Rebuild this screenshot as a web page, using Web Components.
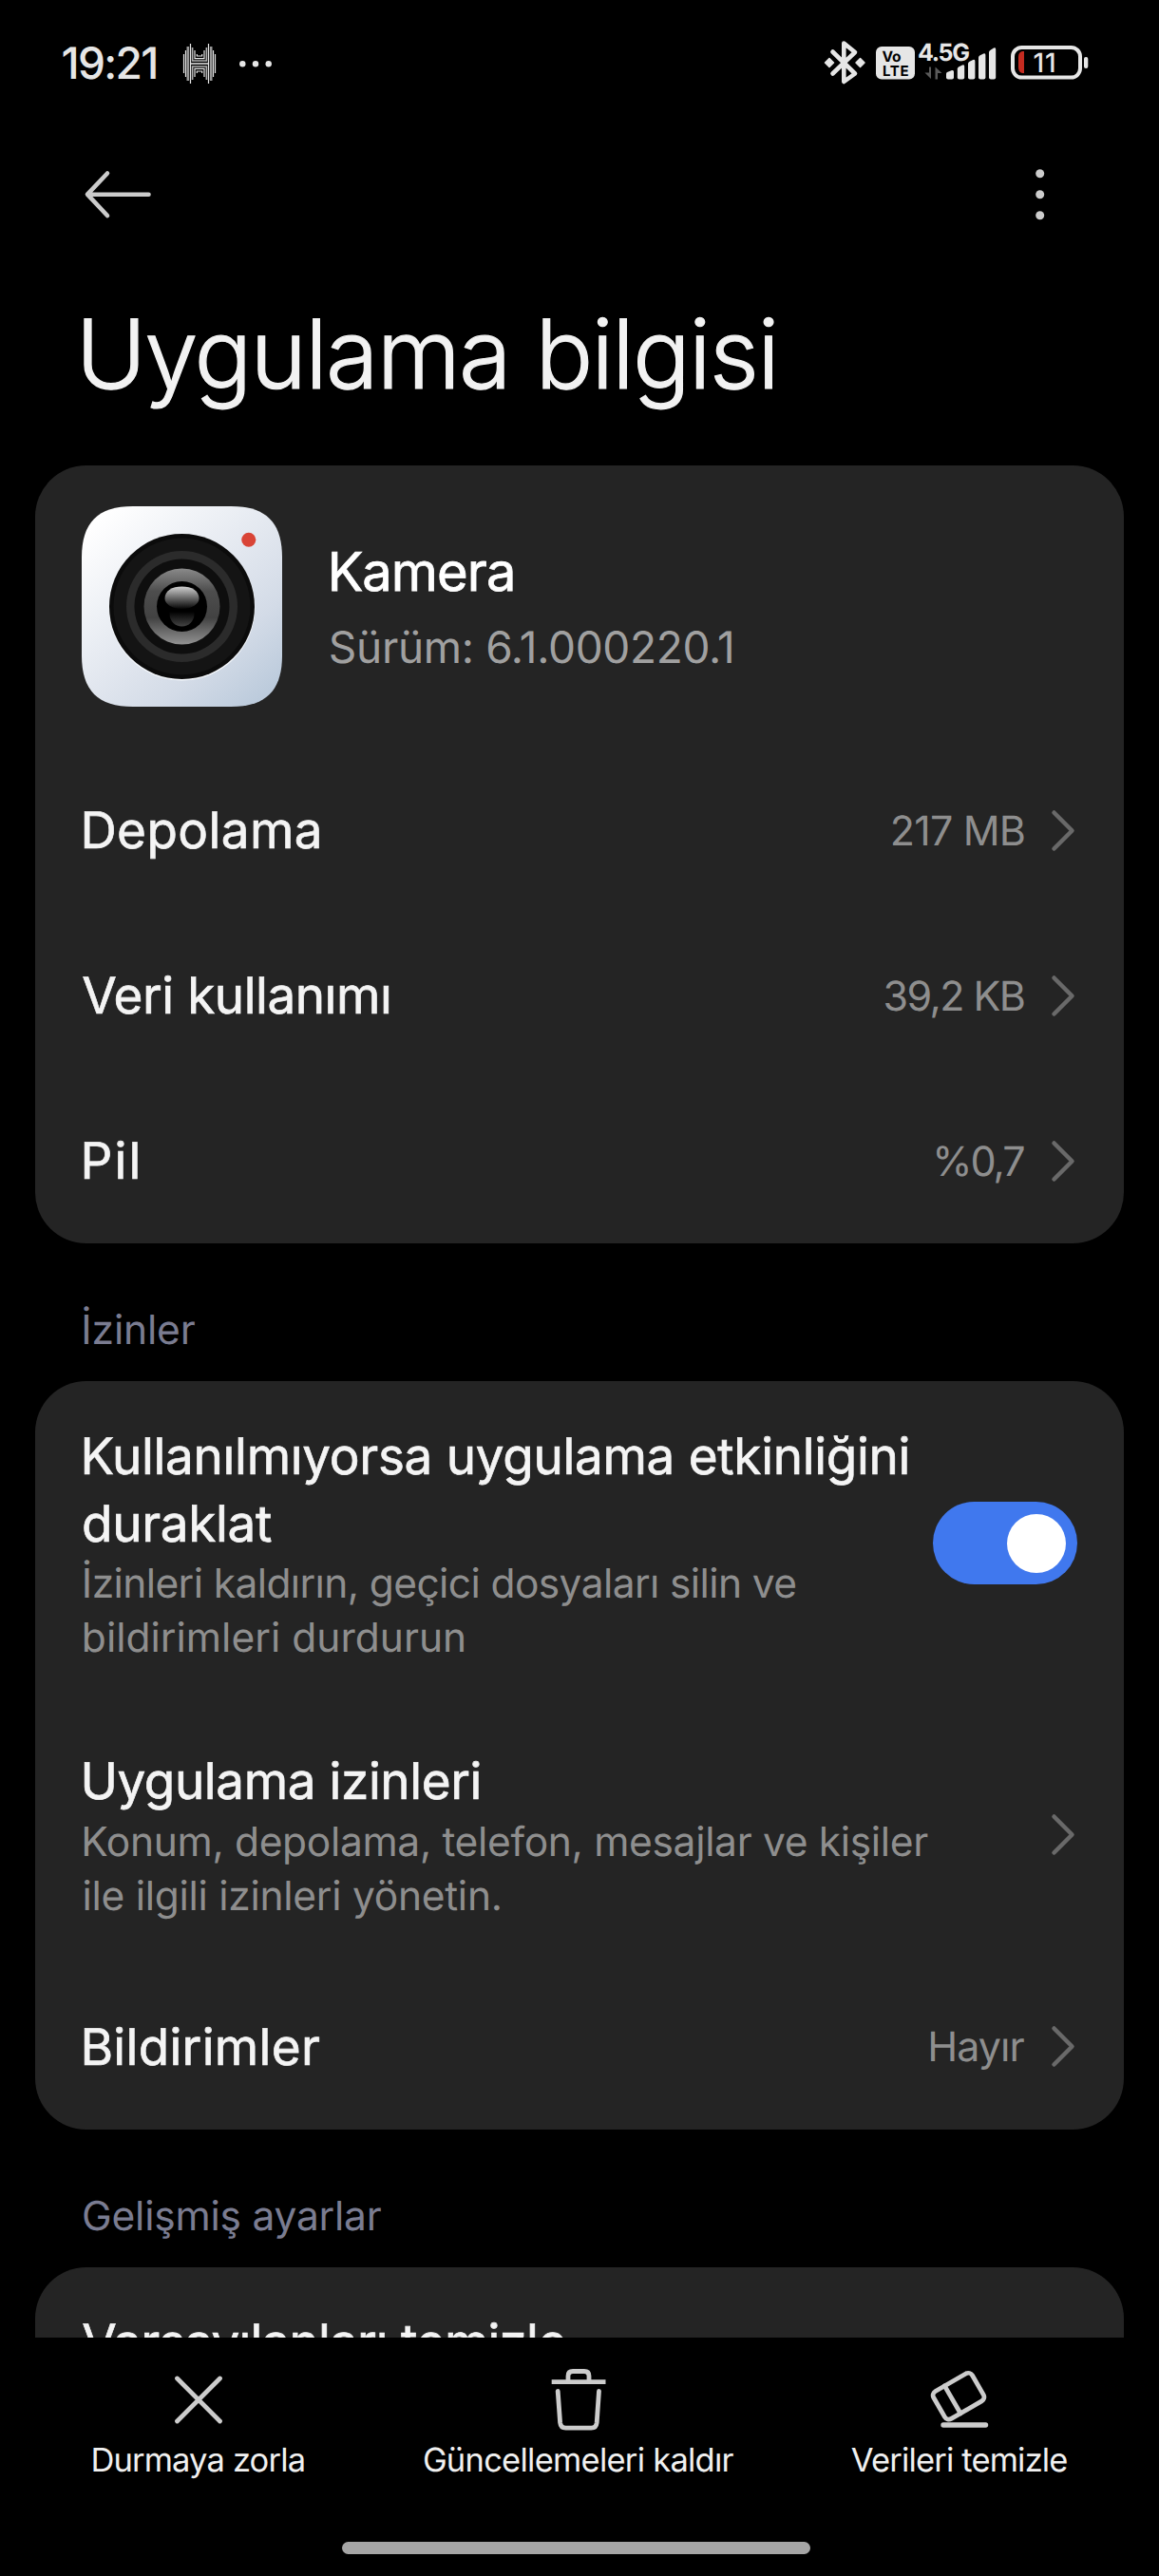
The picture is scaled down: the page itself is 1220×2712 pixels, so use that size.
<!DOCTYPE html>
<html lang="tr">
<head>
  <meta charset="utf-8">
  <title>Uygulama bilgisi</title>
  <style>
    html, body {
      margin: 0;
      background: #000;
    }
    body {
      font-family: Inter, "Noto Sans", sans-serif;
      text-rendering: geometricPrecision;
    }
  </style>
</head>
<body>
  <app-info-page></app-info-page>

  <script>
    // One line of text, tracked so that its ink is exactly `width` pixels wide
    class FitText extends HTMLElement {
      connectedCallback() {
        this.attachShadow({ mode: 'open' }).innerHTML = `
          <style>
            :host {
              display: block;
              white-space: nowrap;
            }
          </style>
          <slot></slot>
        `;
        const text = this.textContent;
        const style = getComputedStyle(this);
        const ctx = document.createElement('canvas').getContext('2d');
        // measured at 10x to keep the fractions
        ctx.font = `${style.fontWeight} ${parseFloat(style.fontSize) * 10}px Inter`;
        const m = ctx.measureText(text);
        const left = -m.actualBoundingBoxLeft / 10;
        const ink = m.actualBoundingBoxRight / 10 - left;
        const spacing = (Number(this.getAttribute('width')) - ink) / (text.length - 1);
        const right = m.width / 10 - ink - left;
        const shift = Number(this.getAttribute('shift') || 0);
        this.style.letterSpacing = `${spacing.toFixed(3)}px`;
        this.style.marginLeft = `${(shift - left).toFixed(2)}px`;
        this.style.marginRight = `${(-right - spacing).toFixed(2)}px`;
      }
    }
    customElements.define('fit-text', FitText);

    class StatusBar extends HTMLElement {
      connectedCallback() {
        this.attachShadow({ mode: 'open' }).innerHTML = `
          <style>
            :host {
              display: flex;
              justify-content: space-between;
              align-items: center;
              box-sizing: border-box;
              height: 133px;
              padding: 0 72px 0 66px;
              color: #e6e6e6;
            }
            .side {
              display: flex;
              align-items: center;
            }
            .time {
              font-size: 46px;
              font-weight: 500;
              line-height: 60px;
            }
            .harman { margin-left: 28px; }
            .more { margin-left: 23px; }
            svg { display: block; }
            text { font-family: Inter, sans-serif; }
          </style>
          <div class="side">
            <fit-text class="time" width="98">19:21</fit-text>
            <svg class="harman" width="36" height="44" viewBox="-18 -22 36 44" fill="none" stroke="#e6e6e6" stroke-width="1.2">
              <path d="M-16.5-10V10M-14.5-14V14M-9.5-21V21M9.5-21V21M14.5-14V14M16.5-10V10"/>
              <path d="M-12.2-18V18M12.2-18V18" stroke="#999" stroke-width="2.6"/>
              <path d="M-7.4-17V-3H7.4V-17M-7.4 17V3H7.4V17" stroke="#b0b0b0" stroke-width="1.6"/>
              <path d="M-5-14V-5.4H5V-14M-5 14V5.4H5V14M-2.7-10V-8H2.7V-10M-2.7 10V8H2.7V10"/>
              <path d="M-9 0H9" stroke="#b0b0b0" stroke-width="2"/>
            </svg>
            <svg class="more" width="36" height="8" viewBox="0 0 36 8" fill="#e6e6e6">
              <circle cx="4.3" cy="4.3" r="3.2"/><circle cx="18" cy="4.3" r="3.2"/><circle cx="31.7" cy="4.3" r="3.2"/>
            </svg>
          </div>
          <svg width="282" height="56" viewBox="868 40 282 56" fill="#e6e6e6">
            <path d="M878.5 55.5L902 78.5L890.3 87V46.5L902 56L878.5 78.5" fill="none" stroke="#e6e6e6" stroke-width="4.6" stroke-linejoin="round" stroke-linecap="round"/>
            <path d="M870.5 67L875 62.5L879.5 67L875 71.5ZM903 67L907.5 62.5L912 67L907.5 71.5Z" stroke="#e6e6e6" stroke-width="1.5" stroke-linejoin="round"/>
            <rect x="924" y="50" width="41" height="34.6" rx="6"/>
            <text x="930.5" y="66" font-size="15.5" font-weight="700" fill="#000" textLength="20">Vo</text>
            <text x="931" y="80.5" font-size="15" font-weight="700" fill="#000" textLength="27.5">LTE</text>
            <text x="968" y="64.5" font-size="25" font-weight="700" textLength="55">4.5G</text>
            <path d="M982 71.5V84L975.5 77.5H980V71.5ZM986.5 84.5V71.5L993.5 78H989V84.5Z" fill="#5a5a5a"/>
            <path d="M998 78.5Q998 77.5 999 77L1004 75Q1006 74.5 1006 76.5V82.5Q1006 84.5 1004 84.5H1000Q998 84.5 998 82.5Z"/>
            <path d="M1009.8 73.5Q1009.8 72.3 1011 71.5L1015 69.5Q1017.2 68.5 1017.2 71V82.5Q1017.2 84.5 1015.2 84.5H1011.8Q1009.8 84.5 1009.8 82.5Z"/>
            <path d="M1021 68Q1021 66.8 1022.2 66L1026.2 64Q1028.4 63 1028.4 65.5V82.5Q1028.4 84.5 1026.4 84.5H1023Q1021 84.5 1021 82.5Z"/>
            <path d="M1032 61.5Q1032 60.3 1033.2 59.5L1037.2 57.5Q1039.4 56.5 1039.4 59V82.5Q1039.4 84.5 1037.4 84.5H1034Q1032 84.5 1032 82.5Z"/>
            <path d="M1043 56Q1043 54.8 1044.2 54L1048 51.5Q1050.2 50.5 1050.2 53V82.5Q1050.2 84.5 1048.2 84.5H1045Q1043 84.5 1043 82.5Z"/>
            <rect x="1068" y="51" width="71" height="31.6" rx="9.5" fill="none" stroke="#e6e6e6" stroke-width="4"/>
            <rect x="1143" y="61" width="4.3" height="12" rx="2"/>
            <path d="M1080 55V78H1078Q1074 77 1074 72V61Q1074 56 1078 55Z" fill="#c42b20"/>
            <text x="1089.5" y="77" font-size="28" font-weight="500" textLength="24">11</text>
          </svg>
        `;
      }
    }
    customElements.define('status-bar', StatusBar);

    class AppBar extends HTMLElement {
      connectedCallback() {
        this.attachShadow({ mode: 'open' }).innerHTML = `
          <style>
            :host {
              display: block;
              height: 357px;
              color: #f2f2f2;
            }
            .actions {
              display: flex;
              justify-content: space-between;
              align-items: center;
              height: 144px;
              padding: 0 85px 0 87.5px;
            }
            h1 {
              margin: 0;
              padding: 1.5px 0 0 87.5px;
              font-size: 101px;
              font-weight: 300;
              line-height: 189px;
              -webkit-text-stroke: 1.2px currentColor;
            }
          </style>
          <div class="actions">
            <svg width="72" height="56" viewBox="0 0 72 56" fill="none" stroke="#ccc" stroke-width="4.6" stroke-linejoin="round" stroke-linecap="round">
              <path d="M68.5 27.7H4.5M25 5.5L4 27.7L25 50"/>
            </svg>
            <svg width="80" height="56" viewBox="0 0 80 56" fill="#ccc">
              <circle cx="39.7" cy="5.7" r="4.5"/><circle cx="39.7" cy="27.7" r="4.5"/><circle cx="39.7" cy="49.7" r="4.5"/>
            </svg>
          </div>
          <h1><fit-text width="727">Uygulama bilgisi</fit-text></h1>
        `;
      }
    }
    customElements.define('app-bar', AppBar);

    class SettingsCard extends HTMLElement {
      connectedCallback() {
        this.attachShadow({ mode: 'open' }).innerHTML = `
          <style>
            :host {
              display: block;
              margin: 0 37px;
              border-radius: 54px;
              background: #242424;
            }
          </style>
          <slot></slot>
        `;
      }
    }
    customElements.define('settings-card', SettingsCard);

    class SectionTitle extends HTMLElement {
      connectedCallback() {
        this.attachShadow({ mode: 'open' }).innerHTML = `
          <style>
            :host {
              display: block;
              box-sizing: border-box;
              height: 145px;
              padding: 62px 88px 0;
              font-size: 42.5px;
              line-height: 60px;
              color: #7a7c91;
            }
          </style>
          <slot></slot>
        `;
      }
    }
    customElements.define('section-title', SectionTitle);

    class AppHeader extends HTMLElement {
      connectedCallback() {
        this.attachShadow({ mode: 'open' }).innerHTML = `
          <style>
            :host {
              display: flex;
              gap: 52px;
              box-sizing: border-box;
              height: 297px;
              padding: 43px 49px 0;
            }
            .info { padding-top: 32px; }
            .name {
              font-size: 56px;
              line-height: 74px;
              color: #fff;
              -webkit-text-stroke: 0.8px currentColor;
            }
            .version {
              margin-top: 6px;
              font-size: 46px;
              line-height: 74px;
              color: #a0a0a0;
            }
          </style>
          <svg width="211" height="211" viewBox="0 0 211 211">
            <defs>
              <linearGradient id="body" x1="0.1" y1="0.05" x2="0.9" y2="0.95">
                <stop offset="0" stop-color="#fff"/><stop offset="0.5" stop-color="#e2e7ef"/><stop offset="0.75" stop-color="#d3dbe7"/><stop offset="1" stop-color="#bccbdc"/>
              </linearGradient>
              <linearGradient id="ring" x1="0" y1="0" x2="0" y2="1">
                <stop offset="0" stop-color="#8a8a8a"/><stop offset="0.3" stop-color="#4d4d4d"/><stop offset="0.65" stop-color="#424242"/><stop offset="1" stop-color="#929292"/>
              </linearGradient>
              <linearGradient id="shine" x1="0" y1="0" x2="0" y2="1">
                <stop offset="0" stop-color="#d0d0d0"/><stop offset="0.5" stop-color="#6a6a6a"/><stop offset="1" stop-color="#050505"/>
              </linearGradient>
              <linearGradient id="glow" x1="0" y1="0" x2="0" y2="1">
                <stop offset="0.4" stop-color="#000"/><stop offset="1" stop-color="#444"/>
              </linearGradient>
            </defs>
            <path d="M54 0H157C194 0 211 17 211 54V157C211 194 194 211 157 211H54C17 211 0 194 0 157V54C0 17 17 0 54 0Z" fill="url(#body)"/>
            <circle cx="105.5" cy="106.5" r="77" fill="#f5f8fc"/>
            <circle cx="105.5" cy="105.5" r="76.5" fill="#0b0b0b"/>
            <circle cx="105.5" cy="105.5" r="72" fill="#141414"/>
            <circle cx="105.5" cy="105.5" r="58.5" fill="#2b2b2b"/>
            <circle cx="105.5" cy="105.5" r="50" fill="#0e0e0e"/>
            <circle cx="105.5" cy="105.5" r="40" fill="url(#ring)"/>
            <circle cx="105.5" cy="105.5" r="26.5" fill="#000"/>
            <circle cx="105.5" cy="113.5" r="13" fill="url(#glow)"/>
            <path d="M87.5 97C87.5 89 95 84.5 105.5 84.5S123.5 89 123.5 97C123.5 103 116 108 105.5 108S87.5 103 87.5 97Z" fill="url(#shine)"/>
            <circle cx="175.8" cy="35.3" r="7.5" fill="#d94436"/>
          </svg>
          <div class="info">
            <fit-text class="name" width="190">Kamera</fit-text>
            <fit-text class="version" width="422" shift="-1">Sürüm: 6.1.000220.1</fit-text>
          </div>
        `;
      }
    }
    customElements.define('app-header', AppHeader);

    // Label and description on the left, value or control on the right
    class SettingsRow extends HTMLElement {
      connectedCallback() {
        this.attachShadow({ mode: 'open' }).innerHTML = `
          <style>
            :host {
              display: flex;
              align-items: center;
              justify-content: space-between;
              box-sizing: border-box;
              min-height: 174px;
              padding: 44px 49px 43px 51.5px;
            }
            :host([plain]) { align-items: flex-start; }
            .text {
              font-size: 53px;
              line-height: 70.5px;
              color: #f4f4f4;
              -webkit-text-stroke: 0.7px currentColor;
            }
            ::slotted([slot="summary"]) {
              font-size: 42.5px;
              line-height: 57px;
              color: #8e8e8e;
              -webkit-text-stroke: 0;
            }
            .end {
              display: flex;
              align-items: center;
              font-size: 43px;
              line-height: 60px;
              color: #8e8e8e;
            }
            svg {
              display: block;
              margin: 0 2px 0 28px;
            }
            :host([toggle]) svg, :host([plain]) svg { display: none; }
          </style>
          <div class="text">
            <slot></slot>
            <slot name="summary"></slot>
          </div>
          <div class="end">
            <slot name="value"></slot>
            <svg width="26" height="46" viewBox="0 0 26 46" fill="none" stroke="#696969" stroke-width="4.5" stroke-linejoin="round" stroke-linecap="round">
              <path d="M3.5 3.5L22.5 22.5L3.5 41.5"/>
            </svg>
          </div>
        `;
      }
    }
    customElements.define('settings-row', SettingsRow);

    class ToggleSwitch extends HTMLElement {
      connectedCallback() {
        this.attachShadow({ mode: 'open' }).innerHTML = `
          <style>
            :host {
              display: flex;
              justify-content: flex-end;
              align-items: center;
              box-sizing: border-box;
              width: 152.5px;
              height: 87px;
              margin-bottom: 2px;
              padding-right: 12px;
              border-radius: 44px;
              background: #4078ee;
            }
            .knob {
              width: 62px;
              height: 62px;
              border-radius: 50%;
              background: #fff;
            }
          </style>
          <div class="knob"></div>
        `;
      }
    }
    customElements.define('toggle-switch', ToggleSwitch);

    class BottomAction extends HTMLElement {
      connectedCallback() {
        this.attachShadow({ mode: 'open' }).innerHTML = `
          <style>
            :host {
              display: flex;
              flex-direction: column;
              align-items: center;
              gap: 7px;
              font-size: 34.5px;
              line-height: 44px;
              color: #f0f0f0;
            }
          </style>
          <slot name="icon"></slot>
          <slot></slot>
        `;
      }
    }
    customElements.define('bottom-action', BottomAction);

    class BottomBar extends HTMLElement {
      connectedCallback() {
        this.attachShadow({ mode: 'open' }).innerHTML = `
          <style>
            :host {
              display: block;
              box-sizing: border-box;
              height: 251px;
              padding-top: 29px;
              background: #000;
            }
            .actions {
              display: grid;
              grid-template-columns: repeat(3, 400.5px);
              padding-left: 8.5px;
            }
            svg {
              display: block;
              fill: none;
              stroke: #ccc;
              stroke-width: 4.8;
              stroke-linecap: round;
              stroke-linejoin: round;
            }
            .home {
              width: 493px;
              height: 13px;
              margin: 63px 0 0 359.5px;
              border-radius: 7px;
              background: #a5a5a5;
            }
          </style>
          <div class="actions">
            <bottom-action>
              <svg slot="icon" width="72" height="72" viewBox="0 0 72 72">
                <path d="M13.5 14L58.5 59M58.5 14L13.5 59"/>
              </svg>
              <fit-text width="221.3">Durmaya zorla</fit-text>
            </bottom-action>
            <bottom-action>
              <svg slot="icon" width="72" height="72" viewBox="0 0 72 72">
                <path d="M7.7 17.7H64.5" stroke-linecap="butt"/>
                <path d="M25 17V11.5Q25 6.5 30 6.5H42Q47 6.5 47 11.5V17"/>
                <path d="M14.2 27.5L16.6 60.5Q17.2 66.2 22.5 66.2H49.5Q54.6 66.2 55.2 60.5L57.5 27.5"/>
              </svg>
              <fit-text width="325.5">Güncellemeleri kaldır</fit-text>
            </bottom-action>
            <bottom-action>
              <svg slot="icon" width="72" height="72" viewBox="0 0 72 72">
                <g transform="translate(35 32.7) rotate(-30)">
                  <rect x="-23.5" y="-16.7" width="47" height="33.4" rx="5"/>
                  <path d="M-7.3-16.7V16.7"/>
                </g>
                <path d="M19 63H63.5" stroke-width="5.4"/>
              </svg>
              <fit-text width="227">Verileri temizle</fit-text>
            </bottom-action>
          </div>
          <div class="home"></div>
        `;
      }
    }
    customElements.define('bottom-bar', BottomBar);

    class AppInfoPage extends HTMLElement {
      connectedCallback() {
        this.attachShadow({ mode: 'open' }).innerHTML = `
          <style>
            :host {
              display: flex;
              flex-direction: column;
              width: 1220px;
              height: 2712px;
              overflow: hidden;
              background: #000;
            }
            .content {
              flex: 1;
              min-height: 0;
              overflow: hidden;
            }
          </style>
          <status-bar></status-bar>
          <app-bar></app-bar>
          <div class="content">
            <settings-card>
              <app-header></app-header>
              <settings-row>
                <fit-text width="247">Depolama</fit-text>
                <fit-text slot="value" width="138.5">217 MB</fit-text>
              </settings-row>
              <settings-row>
                <fit-text width="322" shift="-1.5">Veri kullanımı</fit-text>
                <fit-text slot="value" width="146.5">39,2 KB</fit-text>
              </settings-row>
              <settings-row>
                <fit-text width="56">Pil</fit-text>
                <fit-text slot="value" width="92">%0,7</fit-text>
              </settings-row>
            </settings-card>
            <section-title><fit-text width="117">İzinler</fit-text></section-title>
            <settings-card>
              <settings-row toggle>
                <fit-text width="867">Kullanılmıyorsa uygulama etkinliğini</fit-text>
                <fit-text width="197">duraklat</fit-text>
                <fit-text slot="summary" width="749">İzinleri kaldırın, geçici dosyaları silin ve</fit-text>
                <fit-text slot="summary" width="399.5">bildirimleri durdurun</fit-text>
                <toggle-switch slot="value"></toggle-switch>
              </settings-row>
              <settings-row>
                <fit-text width="416">Uygulama izinleri</fit-text>
                <fit-text slot="summary" width="888">Konum, depolama, telefon, mesajlar ve kişiler</fit-text>
                <fit-text slot="summary" width="437.5">ile ilgili izinleri yönetin.</fit-text>
              </settings-row>
              <settings-row>
                <fit-text width="247.5">Bildirimler</fit-text>
                <fit-text slot="value" width="98.5">Hayır</fit-text>
              </settings-row>
            </settings-card>
            <section-title><fit-text width="313">Gelişmiş ayarlar</fit-text></section-title>
            <settings-card>
              <settings-row plain>
                <fit-text width="508" shift="-1.5">Varsayılanları temizle</fit-text>
              </settings-row>
            </settings-card>
          </div>
          <bottom-bar></bottom-bar>
        `;
      }
    }
    customElements.define('app-info-page', AppInfoPage);
  </script>
</body>
</html>
